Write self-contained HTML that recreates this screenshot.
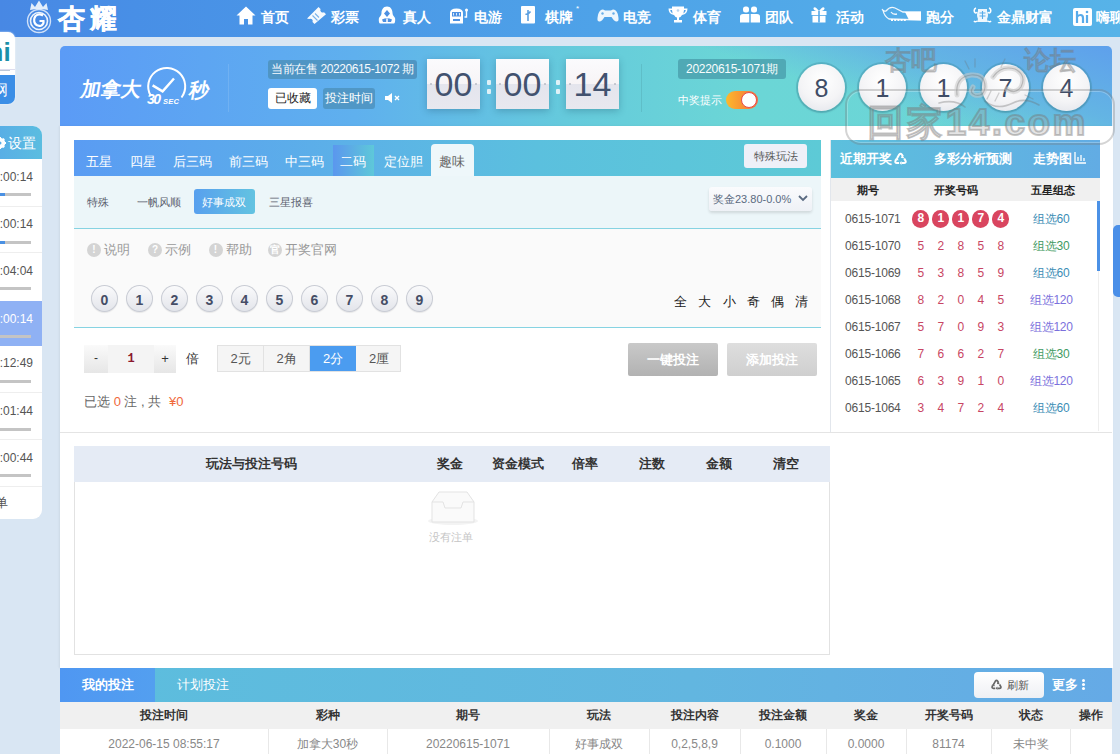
<!DOCTYPE html>
<html><head><meta charset="utf-8">
<style>
*{margin:0;padding:0;box-sizing:border-box}
html,body{width:1120px;height:754px;overflow:hidden}
body{position:relative;background:#d9e6f3;font-family:"Liberation Sans",sans-serif;color:#555;font-size:12px}
.a{position:absolute}
#nav{left:0;top:0;width:1120px;height:37px;background:linear-gradient(90deg,#4888e4 0%,#488fe6 12%,#4ea2e8 53%,#55b0e8 91%,#57b3e8 100%)}
.ni{position:absolute;top:0;height:37px;line-height:34px;color:#fff;font-weight:bold;font-size:14px;white-space:nowrap}
#banner{left:60px;top:46px;width:1052px;height:80px;border-radius:5px 5px 0 0;background:linear-gradient(18deg,rgba(94,160,236,0) 0%,rgba(94,160,236,0) 68%,rgba(94,160,236,.6) 82%,rgba(94,160,236,1) 100%),linear-gradient(90deg,#5b9bf6 0%,#5fb0ee 28%,#65cadc 48%,#6bd6d6 65%,#6cd5d7 100%)}
#main{left:60px;top:126px;width:1053px;height:542px;background:#fff;box-shadow:-1px 0 2px rgba(0,0,0,.06)}
.cd{top:13px;width:53px;height:50px;background:linear-gradient(#fbfbfd 0%,#f7f4f6 50%,#e4e5ed 51%,#e8e8ef 100%);box-shadow:0 2px 7px rgba(20,60,90,.28);color:#42526f;font-size:34px;line-height:51px;text-align:center}
.cl{top:34px;width:5px;height:14px}
.cl:before,.cl:after{content:"";position:absolute;left:0.5px;width:4.5px;height:4.5px;border-radius:1px;background:#e0f2f8}
.cl:before{top:0}.cl:after{top:9px}
.ball{top:17.5px;width:47px;height:47px;border-radius:50%;background:radial-gradient(circle at 50% 35%,#ffffff 0%,#f4f4f6 55%,#dfe1e8 100%);box-shadow:0 0 0 2px rgba(60,140,160,.35),0 1px 3px rgba(0,0,0,.2);color:#3f4d66;font-size:25px;line-height:48px;text-align:center}
.tb{position:absolute;top:4px;height:32px;line-height:35px;color:#fff;font-size:13px;white-space:nowrap}
.sb{position:absolute;top:14px;height:24px;line-height:24px;color:#5a606e;font-size:11px;white-space:nowrap}
.hi{position:absolute;top:13px;line-height:16px;color:#999;font-size:13px;white-space:nowrap}
.hi i{display:inline-block;width:14px;height:14px;border-radius:7px;background:#d4d4d4;color:#fff;font-style:normal;font-size:10px;line-height:14px;text-align:center;margin-right:3px;vertical-align:1px;font-weight:bold}
.nb{position:absolute;top:56px;width:27px;height:27px;border-radius:50%;background:linear-gradient(#fbfbfc,#e2e4ea);box-shadow:inset 0 0 0 1px #c9ccd4,0 1px 1px rgba(0,0,0,.08);color:#454d66;font-weight:bold;font-size:14px;line-height:30px;text-align:center}
.md{position:absolute;top:0;width:46px;height:25px;line-height:25px;text-align:center;color:#555;font-size:13px}
.rh{position:absolute;top:0;line-height:38px;color:#fff;font-weight:bold;font-size:13px;white-space:nowrap}
.ch{position:absolute;top:0;line-height:24px;color:#222;font-weight:bold;font-size:11px;white-space:nowrap}
.rw{left:0;width:269px;height:20px;line-height:20px;font-size:12px;letter-spacing:-0.2px}
.rb{position:absolute;top:1.3px;width:17.4px;height:17.4px;border-radius:50%;background:#d9455f;color:#fff;font-weight:bold;font-size:12px;line-height:17.4px;text-align:center}
.th{position:absolute;top:0;line-height:36px;color:#333;font-size:13px;font-weight:bold;white-space:nowrap}
.bh{top:34px;height:27px;line-height:27px;text-align:center;color:#333;font-weight:bold;font-size:12px}
.bd{top:61px;height:25px;line-height:31px;text-align:center;color:#888;font-size:12px}

.cd:before,.cd:after{content:"";position:absolute;top:24px;width:2px;height:2px;background:#b9bcc6;border-radius:1px}.cd:before{left:3px}.cd:after{right:3px}

</style></head><body>
<div id="nav" class="a">
 <!-- logo -->
 <svg class="a" style="left:25px;top:0" width="30" height="35" viewBox="0 0 30 35">
  <g fill="none" stroke="#fff">
   <circle cx="14" cy="21" r="11.5" stroke-width="1.4" stroke-opacity=".75"/>
   <circle cx="14" cy="21" r="8.5" stroke-width="1.6" stroke-opacity=".9"/>
   <path d="M18 15.5 Q14 13 10.5 16 Q8 19.5 10 23.5 Q12.5 27 16.5 25.5 Q19 24 18.5 21 L14.5 21" stroke-width="2.2"/>
  </g>
  <path d="M5 10 L6.5 3 L10 7 L14 0.5 L18 7 L21.5 3 L23 10 Q14 8 5 10 Z" fill="#fff" fill-opacity=".85"/>
 </svg>
 <div class="a" style="left:58px;top:1px;font-size:27px;font-weight:bold;color:#fff;line-height:36px;letter-spacing:5px;-webkit-text-stroke:0.5px #fff">杏耀</div>
 <!-- nav items -->
 <svg class="a" style="left:236px;top:6px" width="20" height="19" viewBox="0 0 20 19"><path d="M10 0.5 L19.5 9.5 L16.5 9.5 L16.5 18.5 L12 18.5 L12 13 L8 13 L8 18.5 L3.5 18.5 L3.5 9.5 L0.5 9.5 Z" fill="#fff"/></svg>
 <div class="ni" style="left:261px">首页</div>
 <svg class="a" style="left:306px;top:6px" width="21" height="19" viewBox="0 0 21 19"><path d="M1 12.5 L12.5 1 L14.5 3 Q13.8 5 15.2 6 Q16.5 7 18 6.3 L20 8.3 L8.5 18 L6.5 16 Q7.2 14.5 6 13.3 Q4.8 12.2 3 13 Z" fill="#fff" fill-opacity=".95"/><path d="M6.5 9.5 L11.5 14.5 M9 7.5 L13 11.5" stroke="#7ab3ea" stroke-width="1.1"/></svg>
 <div class="ni" style="left:331px">彩票</div>
 <svg class="a" style="left:378px;top:6px" width="18" height="18" viewBox="0 0 18 18"><path d="M9 0.5 C5 0.5 3.5 4 3.5 7 C3.5 9 2 10.5 1 12 C0.5 14 1 17.5 2 17.5 L16 17.5 C17 17.5 17.5 14 17 12 C16 10.5 14.5 9 14.5 7 C14.5 4 13 0.5 9 0.5 Z" fill="#fff"/><path d="M9 4 L12 7.5 L9 11 L6 7.5 Z" fill="#4d90e2"/><path d="M4 13.5 Q9 11 14 13.5 L13 16 L5 16 Z" fill="#4d90e2"/><path d="M9 12.5 L9 16" stroke="#fff" stroke-width="1.5"/></svg>
 <div class="ni" style="left:403px">真人</div>
 <svg class="a" style="left:449px;top:8px" width="20" height="16" viewBox="0 0 20 16"><path d="M1 5 Q1 0.5 7.5 0.5 Q14 0.5 14 5 L14 15.5 L1 15.5 Z" fill="#fff"/><rect x="3" y="4" width="9" height="4.5" fill="#4e92e3"/><path d="M4.5 5 L4.5 7.5 M7.5 5 L7.5 7.5 M10.5 5 L10.5 7.5" stroke="#fff" stroke-width=".8"/><rect x="4" y="11" width="7" height="2" fill="#4e92e3"/><path d="M15.5 9 L17.5 9 L17.5 2" stroke="#fff" stroke-width="1.4" fill="none"/><circle cx="17.5" cy="2" r="1.5" fill="#fff"/></svg>
 <div class="ni" style="left:474px">电游</div>
 <svg class="a" style="left:521px;top:6px" width="14" height="18" viewBox="0 0 14 18"><rect x="0" y="0" width="14" height="17.5" rx="1" fill="#fff"/><path d="M7 4 L7 15 M4.5 8 Q7 9 9.5 5.5" stroke="#5b9fe0" stroke-width="1.6" fill="none"/></svg>
 <div class="ni" style="left:545px">棋牌</div>
 <div class="a" style="left:576px;top:4px;color:#fff;font-size:8px">*</div>
 <svg class="a" style="left:597px;top:9px" width="22" height="13" viewBox="0 0 22 13"><path d="M4 1 Q6 0 8 1.5 L14 1.5 Q16 0 18 1 Q21 3 21.5 9 Q22 13 19 12.5 Q17 12 14.5 8 L7.5 8 Q5 12 3 12.5 Q0 13 0.5 9 Q1 3 4 1 Z" fill="#fff" fill-opacity=".9"/><circle cx="5.5" cy="4.5" r="1.2" fill="#6aaee8"/><circle cx="16.5" cy="4.5" r="1.2" fill="#6aaee8"/></svg>
 <div class="ni" style="left:623px">电竞</div>
 <svg class="a" style="left:668px;top:6px" width="20" height="17" viewBox="0 0 20 17"><path d="M4 0.5 L16 0.5 L16 2.5 L19.5 2.5 Q19.5 8 14 9 Q12.5 11.5 11 11.5 L11 14 L14 14 L14 16.5 L6 16.5 L6 14 L9 14 L9 11.5 Q7.5 11.5 6 9 Q0.5 8 0.5 2.5 L4 2.5 Z" fill="#fff"/><path d="M4 4 L2.2 4 Q2.6 7 4.6 7.6 Z M16 4 L17.8 4 Q17.4 7 15.4 7.6 Z" fill="#52a2e7"/><circle cx="10" cy="4.5" r="1.3" fill="#b8d4f0"/></svg>
 <div class="ni" style="left:693px">体育</div>
 <svg class="a" style="left:740px;top:6px" width="20" height="17" viewBox="0 0 20 17"><rect x="3" y="0.5" width="6" height="6" rx="2.5" fill="#fff"/><rect x="11" y="0.5" width="6" height="6" rx="2.5" fill="#fff"/><path d="M0 16.5 L0 10.5 Q0 8 3 8 L9.3 8 L9.3 16.5 Z M10.7 16.5 L10.7 8 L17 8 Q20 8 20 10.5 L20 16.5 Z" fill="#fff"/></svg>
 <div class="ni" style="left:765px">团队</div>
 <svg class="a" style="left:811px;top:6px" width="16" height="17" viewBox="0 0 16 17"><rect x="0.5" y="5" width="15" height="4" fill="#fff"/><rect x="1.5" y="9.8" width="13" height="6.7" fill="#fff"/><rect x="7.2" y="5" width="1.6" height="11.5" fill="#55a8e8"/><path d="M8 5 Q4 -0.5 2.5 2 Q2 5 8 5 Q14 5 13.5 2 Q12 -0.5 8 5Z" fill="#fff"/></svg>
 <div class="ni" style="left:836px">活动</div>
 <svg class="a" style="left:881px;top:6px" width="41" height="16" viewBox="0 0 41 16"><g fill="none" stroke="#fff" stroke-width="1.3" stroke-opacity=".9"><path d="M1 3 Q3 6 5 5 Q9 0 14 2 Q18 4 22 6 L40 6"/><path d="M2 4 Q3 10 8 13 L40 14"/><path d="M10 6 Q12 9 16 8"/></g><path d="M24 6 L40 6 L40 14 L28 14 Q26 10 24 6 Z" fill="#fff"/><path d="M10 14 L26 14" stroke="#fff" stroke-width="1.8" stroke-dasharray="2 1.2"/></svg>
 <div class="ni" style="left:926px">跑分</div>
 <svg class="a" style="left:973px;top:7px" width="19" height="16" viewBox="0 0 19 16"><g fill="none" stroke="#fff" stroke-width="1.5"><path d="M3 1 Q0.5 2 1.5 5 Q3 7 4 5"/><path d="M16 1 Q18.5 2 17.5 5 Q16 7 15 5"/><path d="M4 14 Q2 15.5 1 14"/><path d="M15 14 Q17 15.5 18 14"/></g><path d="M5 2 L14 2 L14 4 Q16 8 14 12 L15 15 L4 15 L5 12 Q3 8 5 4 Z" fill="#fff" fill-opacity=".9"/><path d="M6.5 6 L12.5 6 M6.5 9 L12.5 9 M9.5 4 L9.5 12" stroke="#57abe9" stroke-width="1.1"/></svg>
 <div class="ni" style="left:997px">金鼎财富</div>
 <svg class="a" style="left:1073px;top:8px" width="19" height="18" viewBox="0 0 19 18"><rect x="0" y="0" width="19" height="18" rx="2" fill="#fff"/><path d="M4 3 L4 15 M4 9 Q5 7 7.5 7 Q10 7 10 10 L10 15" stroke="#58abea" stroke-width="2.2" fill="none"/><path d="M14 7 L14 15" stroke="#58abea" stroke-width="2.2"/><circle cx="14" cy="4" r="1.3" fill="#58abea"/></svg>
 <div class="ni" style="left:1096px">嗨聊</div>
</div>

<div class="a" style="left:-10px;top:32px;width:25px;height:72px;border-radius:7px;background:#fff;box-shadow:0 0 2px rgba(255,255,255,.8);overflow:hidden">
 <div class="a" style="left:-2.5px;top:6px;font-size:26px;font-weight:bold;color:#1a8fa8;line-height:28px">hi</div>
 <div class="a" style="left:0;top:37px;width:25px;height:1px;background:#dde"></div><div class="a" style="left:0;top:38px;width:20px;height:1px;background:#bcc8d8"></div>
 <div class="a" style="left:0;top:43px;width:25px;height:29px;background:#3b8ee6;color:#fff;font-size:15px;line-height:29px;padding-left:3px">网</div>
</div>
<div class="a" style="left:-20px;top:126px;width:62px;height:393px;border-radius:9px;background:#fff;overflow:hidden">
 <div class="a" style="left:0;top:0;width:62px;height:33px;background:linear-gradient(90deg,#58a8e8,#5bbde0);color:#fff;font-size:14px;line-height:34px;padding-left:28px">设置</div>
 <svg class="a" style="left:14px;top:11px" width="12" height="12" viewBox="0 0 12 12"><circle cx="6" cy="6" r="4" fill="none" stroke="#fff" stroke-width="2.5"/><path d="M6 0 L6 12 M0 6 L12 6 M1.8 1.8 L10.2 10.2 M10.2 1.8 L1.8 10.2" stroke="#fff" stroke-width="2"/><circle cx="6" cy="6" r="1.5" fill="#5aaee6"/></svg>
 <div class="a" style="left:0;top:33.0px;width:62px;height:47.8px;border-bottom:1px solid #eee;">
  <div class="a" style="right:9px;top:9.5px;font-size:12px;color:#555;line-height:16px">:00:14</div>
  <div class="a" style="left:0;top:34px;width:51px;height:3px;background:#c4c4c4"><div class="a" style="left:0;top:0;width:25px;height:3px;background:#4a90e2"></div></div>
 </div>
 <div class="a" style="left:0;top:80.8px;width:62px;height:46.2px;border-bottom:1px solid #eee;">
  <div class="a" style="right:9px;top:9.5px;font-size:12px;color:#555;line-height:16px">:00:14</div>
  <div class="a" style="left:0;top:34px;width:51px;height:3px;background:#c4c4c4"><div class="a" style="left:0;top:0;width:25px;height:3px;background:#4a90e2"></div></div>
 </div>
 <div class="a" style="left:0;top:127.0px;width:62px;height:48.0px;">
  <div class="a" style="right:9px;top:9.5px;font-size:12px;color:#555;line-height:16px">:04:04</div>
  <div class="a" style="left:0;top:34px;width:51px;height:3px;background:#c4c4c4"></div>
 </div>
 <div class="a" style="left:0;top:175.0px;width:62px;height:44.7px;background:#8fb1f4;">
  <div class="a" style="right:9px;top:9.5px;font-size:12px;color:#fff;line-height:16px">:00:14</div>
  <div class="a" style="left:0;top:34px;width:51px;height:3px;background:#c4c4c4"></div>
 </div>
 <div class="a" style="left:0;top:219.7px;width:62px;height:47.8px;border-bottom:1px solid #eee;">
  <div class="a" style="right:9px;top:9.5px;font-size:12px;color:#555;line-height:16px">:12:49</div>
  <div class="a" style="left:0;top:34px;width:51px;height:3px;background:#c4c4c4"></div>
 </div>
 <div class="a" style="left:0;top:267.5px;width:62px;height:46.8px;border-bottom:1px solid #eee;">
  <div class="a" style="right:9px;top:9.5px;font-size:12px;color:#555;line-height:16px">:01:44</div>
  <div class="a" style="left:0;top:34px;width:51px;height:3px;background:#c4c4c4"></div>
 </div>
 <div class="a" style="left:0;top:314.3px;width:62px;height:47.2px;border-bottom:1px solid #eee;">
  <div class="a" style="right:9px;top:9.5px;font-size:12px;color:#555;line-height:16px">:00:44</div>
  <div class="a" style="left:0;top:34px;width:51px;height:3px;background:#c4c4c4"></div>
 </div>
 <div class="a" style="left:2px;top:369px;font-size:13px;color:#555;line-height:16px">菜单</div>
</div>
<div class="a" style="left:1113px;top:225px;width:7px;height:72px;border-radius:5px 0 0 5px;background:#4a8fe8"></div>
<div id="banner" class="a">
 <div class="a" style="left:21px;top:32px;font-size:20px;line-height:22px;color:#fff;font-weight:bold;letter-spacing:0px;transform:skewX(-10deg)">加拿大</div>
 <svg class="a" style="left:82px;top:18px" width="52" height="44" viewBox="0 0 52 44">
  <path d="M8.6 31.5 A18.5 18.5 0 1 1 39.5 33.5" fill="none" stroke="#fff" stroke-width="2"/>
  <path d="M10.6 21.4 L20.6 27.4 L32 14.5" fill="none" stroke="#fff" stroke-width="2.4"/>
  <text x="5" y="40" font-family="Liberation Sans" font-weight="bold" font-style="italic" font-size="14" fill="#fff" letter-spacing="-1.5">30</text>
  <text x="21" y="40" font-family="Liberation Sans" font-weight="bold" font-style="italic" font-size="7.5" fill="#fff" letter-spacing=".3">SEC</text>
 </svg>
 <div class="a" style="left:129px;top:33px;font-size:20px;line-height:22px;color:#fff;font-weight:bold;transform:skewX(-10deg)">秒</div>
 <div class="a" style="left:168px;top:18px;width:1px;height:48px;background:rgba(255,255,255,.12)"></div>
 <div class="a" style="left:208px;top:14px;width:149px;height:19px;background:#4f94c2;border-radius:3px;color:#fff;font-size:12px;line-height:19px;text-align:center;white-space:nowrap;letter-spacing:-0.4px;opacity:.95">当前在售 20220615-1072 期</div>
 <div class="a" style="left:208px;top:42px;width:49px;height:21px;background:#fff;border-radius:3px;color:#222;font-size:12px;line-height:21px;text-align:center">已收藏</div>
 <div class="a" style="left:263px;top:42px;width:52px;height:21px;background:#5097c6;border-radius:3px;color:#fff;font-size:12px;line-height:21px;text-align:center">投注时间</div>
 <svg class="a" style="left:324px;top:46px" width="17" height="12" viewBox="0 0 17 12"><path d="M1 4 L4 4 L8 1 L8 11 L4 8 L1 8 Z" fill="#fff"/><path d="M11 4 L15 8 M15 4 L11 8" stroke="#fff" stroke-width="1.4"/></svg>
 <!-- countdown -->
 <div class="cd a" style="left:367px">00</div>
 <div class="cl a" style="left:426px"></div>
 <div class="cd a" style="left:436px">00</div>
 <div class="cl a" style="left:495px"></div>
 <div class="cd a" style="left:506px">14</div>
 <div class="a" style="left:581px;top:18px;width:1px;height:48px;background:rgba(0,0,0,.08)"></div>
 <div class="a" style="left:618px;top:13px;width:108px;height:20px;background:#4fa7b4;border-radius:3px;color:#fff;font-size:12px;line-height:20px;text-align:center;white-space:nowrap;letter-spacing:-0.3px;opacity:.95">20220615-1071期</div>
 <div class="a" style="left:618px;top:47px;font-size:11px;color:#fff;line-height:14px">中奖提示</div>
 <div class="a" style="left:666px;top:45px;width:32px;height:18px;border-radius:9px;background:linear-gradient(90deg,#fcb92d,#f36d3c)"><div class="a" style="right:1px;top:1px;width:16px;height:16px;border-radius:8px;background:#fff;border:1.5px solid #e94b4b"></div></div>
 <div class="ball a" style="left:738px">8</div>
 <div class="ball a" style="left:799px">1</div>
 <div class="ball a" style="left:860px">1</div>
 <div class="ball a" style="left:922px">7</div>
 <div class="ball a" style="left:983px">4</div>
</div>

<div id="main" class="a">
 <div class="a" style="left:770px;top:14px;width:1px;height:293px;background:#e2e6ec"></div>
 <!-- tab bar -->
 <div class="a" style="left:14px;top:14px;width:747px;height:36px;background:linear-gradient(90deg,#5a9cf3 0%,#5cb0e8 35%,#5bc0de 62%,#5dcad6 100%)">
  <div class="a" style="left:259px;top:5px;width:41px;height:31px;background:linear-gradient(90deg,#5b97ee,#5ec8d9)"></div>
  <div class="tb" style="left:12px">五星</div>
  <div class="tb" style="left:56px">四星</div>
  <div class="tb" style="left:99px">后三码</div>
  <div class="tb" style="left:155px">前三码</div>
  <div class="tb" style="left:211px">中三码</div>
  <div class="tb" style="left:266px">二码</div>
  <div class="tb" style="left:310px">定位胆</div>
  <div class="a" style="left:357px;top:4px;width:43px;height:32px;background:#eef7fa;border-radius:4px 4px 0 0"></div>
  <div class="tb" style="left:365px;color:#666">趣味</div>
  <div class="a" style="left:670px;top:4px;width:63px;height:24px;background:#eef0f8;border-radius:3px;color:#555;font-size:11px;line-height:24px;text-align:center">特殊玩法</div>
 </div>
 <!-- sub bar -->
 <div class="a" style="left:14px;top:50px;width:747px;height:53px;background:#ecf6f9;border-bottom:1px solid #86d3e2">
  <div class="sb" style="left:13px">特殊</div>
  <div class="sb" style="left:63px">一帆风顺</div>
  <div class="a" style="left:120px;top:13px;width:61px;height:25px;border-radius:3px;background:linear-gradient(90deg,#58a0ee,#63c3e1)"></div>
  <div class="sb" style="left:128px;color:#fff">好事成双</div>
  <div class="sb" style="left:195px">三星报喜</div>
  <div class="a" style="left:635px;top:11px;width:103px;height:24px;border-radius:3px;background:linear-gradient(#fafbfd,#eef1f6);box-shadow:0 2px 3px rgba(0,0,0,.12);color:#5a6a80;font-size:11px;line-height:24px;padding-left:4px">奖金23.80-0.0%</div>
  <svg class="a" style="left:724px;top:19px" width="10" height="7" viewBox="0 0 10 7"><path d="M1 1 L5 5 L9 1" stroke="#5a6a80" stroke-width="1.8" fill="none"/></svg>
 </div>
 <!-- number area -->
 <div class="a" style="left:14px;top:103px;width:747px;height:99px;background:#fafafa;border-bottom:1px solid #86d3e2">
  <div class="hi" style="left:13px"><i>!</i>说明</div>
  <div class="hi" style="left:74px"><i>?</i>示例</div>
  <div class="hi" style="left:134.5px"><i>!</i>帮助</div>
  <div class="hi" style="left:194px"><i>官</i>开奖官网</div>
  <div class="nb" style="left:17px">0</div>
  <div class="nb" style="left:52px">1</div>
  <div class="nb" style="left:87px">2</div>
  <div class="nb" style="left:122px">3</div>
  <div class="nb" style="left:157px">4</div>
  <div class="nb" style="left:192px">5</div>
  <div class="nb" style="left:227px">6</div>
  <div class="nb" style="left:262px">7</div>
  <div class="nb" style="left:297px">8</div>
  <div class="nb" style="left:332px">9</div>
  <div class="a" style="left:600px;top:65px;font-size:13px;color:#222;letter-spacing:11.3px;line-height:16px">全大小奇偶清</div>
 </div>
 <!-- controls -->
 <div class="a" style="left:24px;top:219px;width:24px;height:28px;background:linear-gradient(#fafafa,#e6e6e6);text-align:center;line-height:26px;color:#333;font-size:12px">-</div>
 <div class="a" style="left:48px;top:219px;width:46px;height:28px;background:#f4f4f4;text-align:center;line-height:28px;color:#8b1a2e;font-size:12px;font-family:'Liberation Mono',monospace;font-weight:bold">1</div>
 <div class="a" style="left:94px;top:219px;width:22px;height:28px;background:linear-gradient(#fafafa,#e6e6e6);text-align:center;line-height:28px;color:#333;font-size:13px">+</div>
 <div class="a" style="left:126px;top:219px;line-height:28px;color:#333;font-size:13px">倍</div>
 <div class="a" style="left:157px;top:219px;width:184px;height:27px;border:1px solid #e2e2e2;background:#f5f5f5">
  <div class="md" style="left:0;border-right:1px solid #e2e2e2">2元</div>
  <div class="md" style="left:46px;border-right:1px solid #e2e2e2">2角</div>
  <div class="md" style="left:92px;width:46px;background:#4b9cf0;color:#fff">2分</div>
  <div class="md" style="left:138px">2厘</div>
 </div>
 <div class="a" style="left:568px;top:217px;width:90px;height:33px;border-radius:2px;background:linear-gradient(#c9c9c9,#b2b2b2);color:#fff;font-weight:bold;font-size:13px;line-height:33px;text-align:center">一键投注</div>
 <div class="a" style="left:667px;top:217px;width:90px;height:33px;border-radius:2px;background:linear-gradient(#dedede,#cfcfcf);color:#fff;font-weight:bold;font-size:13px;line-height:33px;text-align:center">添加投注</div>
 <div class="a" style="left:24px;top:268px;font-size:13px;color:#666;line-height:16px">已选 <span style="color:#f0683a">0</span> 注 , 共 <span style="color:#f0683a"><span style="margin-left:4px">¥0</span></span></div>
 <!-- right panel -->
 <div class="a" style="left:771px;top:14px;width:269px;height:38px;background:linear-gradient(90deg,#5cc0dd,#62ace4)">
  <div class="rh" style="left:9px">近期开奖</div>
  <svg class="a" style="left:63px;top:12px" width="13" height="13" viewBox="0 0 13 13"><g fill="none" stroke="#fff" stroke-width="2" stroke-linejoin="round"><path d="M3.2 6 L5.2 2.5 Q6.5 0.8 7.8 2.5 L9 4.5"/><path d="M10.2 6.5 L11.6 9 Q12.2 11 10 11 L7.5 11"/><path d="M5 11 L2.8 11 Q0.8 11 1.4 9 L2.2 7.5"/></g><path d="M8 3 L10.5 6.2 L7 6 Z M7.5 9 L5.5 11 L7.5 13 Z M0.5 7.5 L3.5 5 L4.5 8.5 Z" fill="#fff"/></svg>
  <div class="rh" style="left:103px">多彩分析预测</div>
  <div class="rh" style="left:202px">走势图</div>
  <svg class="a" style="left:243px;top:12px" width="13" height="12" viewBox="0 0 13 12"><path d="M1 0 L1 11 L12 11 M4 5 L4 9 M7 3 L7 9 M10 6 L10 9" stroke="#fff" stroke-width="1.3" fill="none"/></svg>
 </div>
 <div class="a" style="left:771px;top:52px;width:269px;height:23px;background:#f0f0f0">
  <div class="ch" style="left:25.5px">期号</div>
  <div class="ch" style="left:103px">开奖号码</div>
  <div class="ch" style="left:199.5px">五星组态</div>
 </div>
 <div class="a" style="left:1037px;top:75px;width:3px;height:70px;background:#4b91e6"></div>
 <div class="a" style="left:1038px;top:145px;width:1px;height:160px;background:#eee"></div>
 <div class="a" style="left:771px;top:0"> <div class="a rw" style="top:83px">
  <div class="a" style="left:14px;top:0;color:#555">0615-1071</div>
  <div class="rb" style="left:81.0px">8</div>
  <div class="rb" style="left:101.0px">1</div>
  <div class="rb" style="left:121.0px">1</div>
  <div class="rb" style="left:141.0px">7</div>
  <div class="rb" style="left:161.0px">4</div>
  <div class="a" style="left:180.3px;width:80px;text-align:center;color:#3b8db5">组选60</div>
 </div>
 <div class="a rw" style="top:110px">
  <div class="a" style="left:14px;top:0;color:#555">0615-1070</div>
  <div class="a" style="left:79.7px;width:20px;text-align:center;color:#c84563">5</div>
  <div class="a" style="left:99.7px;width:20px;text-align:center;color:#c84563">2</div>
  <div class="a" style="left:119.7px;width:20px;text-align:center;color:#c84563">8</div>
  <div class="a" style="left:139.7px;width:20px;text-align:center;color:#c84563">5</div>
  <div class="a" style="left:159.7px;width:20px;text-align:center;color:#c84563">8</div>
  <div class="a" style="left:180.3px;width:80px;text-align:center;color:#3f9a62">组选30</div>
 </div>
 <div class="a rw" style="top:137px">
  <div class="a" style="left:14px;top:0;color:#555">0615-1069</div>
  <div class="a" style="left:79.7px;width:20px;text-align:center;color:#c84563">5</div>
  <div class="a" style="left:99.7px;width:20px;text-align:center;color:#c84563">3</div>
  <div class="a" style="left:119.7px;width:20px;text-align:center;color:#c84563">8</div>
  <div class="a" style="left:139.7px;width:20px;text-align:center;color:#c84563">5</div>
  <div class="a" style="left:159.7px;width:20px;text-align:center;color:#c84563">9</div>
  <div class="a" style="left:180.3px;width:80px;text-align:center;color:#3b8db5">组选60</div>
 </div>
 <div class="a rw" style="top:164px">
  <div class="a" style="left:14px;top:0;color:#555">0615-1068</div>
  <div class="a" style="left:79.7px;width:20px;text-align:center;color:#c84563">8</div>
  <div class="a" style="left:99.7px;width:20px;text-align:center;color:#c84563">2</div>
  <div class="a" style="left:119.7px;width:20px;text-align:center;color:#c84563">0</div>
  <div class="a" style="left:139.7px;width:20px;text-align:center;color:#c84563">4</div>
  <div class="a" style="left:159.7px;width:20px;text-align:center;color:#c84563">5</div>
  <div class="a" style="left:180.3px;width:80px;text-align:center;color:#7b70dc">组选120</div>
 </div>
 <div class="a rw" style="top:191px">
  <div class="a" style="left:14px;top:0;color:#555">0615-1067</div>
  <div class="a" style="left:79.7px;width:20px;text-align:center;color:#c84563">5</div>
  <div class="a" style="left:99.7px;width:20px;text-align:center;color:#c84563">7</div>
  <div class="a" style="left:119.7px;width:20px;text-align:center;color:#c84563">0</div>
  <div class="a" style="left:139.7px;width:20px;text-align:center;color:#c84563">9</div>
  <div class="a" style="left:159.7px;width:20px;text-align:center;color:#c84563">3</div>
  <div class="a" style="left:180.3px;width:80px;text-align:center;color:#7b70dc">组选120</div>
 </div>
 <div class="a rw" style="top:218px">
  <div class="a" style="left:14px;top:0;color:#555">0615-1066</div>
  <div class="a" style="left:79.7px;width:20px;text-align:center;color:#c84563">7</div>
  <div class="a" style="left:99.7px;width:20px;text-align:center;color:#c84563">6</div>
  <div class="a" style="left:119.7px;width:20px;text-align:center;color:#c84563">6</div>
  <div class="a" style="left:139.7px;width:20px;text-align:center;color:#c84563">2</div>
  <div class="a" style="left:159.7px;width:20px;text-align:center;color:#c84563">7</div>
  <div class="a" style="left:180.3px;width:80px;text-align:center;color:#3f9a62">组选30</div>
 </div>
 <div class="a rw" style="top:245px">
  <div class="a" style="left:14px;top:0;color:#555">0615-1065</div>
  <div class="a" style="left:79.7px;width:20px;text-align:center;color:#c84563">6</div>
  <div class="a" style="left:99.7px;width:20px;text-align:center;color:#c84563">3</div>
  <div class="a" style="left:119.7px;width:20px;text-align:center;color:#c84563">9</div>
  <div class="a" style="left:139.7px;width:20px;text-align:center;color:#c84563">1</div>
  <div class="a" style="left:159.7px;width:20px;text-align:center;color:#c84563">0</div>
  <div class="a" style="left:180.3px;width:80px;text-align:center;color:#7b70dc">组选120</div>
 </div>
 <div class="a rw" style="top:272px">
  <div class="a" style="left:14px;top:0;color:#555">0615-1064</div>
  <div class="a" style="left:79.7px;width:20px;text-align:center;color:#c84563">3</div>
  <div class="a" style="left:99.7px;width:20px;text-align:center;color:#c84563">4</div>
  <div class="a" style="left:119.7px;width:20px;text-align:center;color:#c84563">7</div>
  <div class="a" style="left:139.7px;width:20px;text-align:center;color:#c84563">2</div>
  <div class="a" style="left:159.7px;width:20px;text-align:center;color:#c84563">4</div>
  <div class="a" style="left:180.3px;width:80px;text-align:center;color:#3b8db5">组选60</div>
 </div></div>
 <div class="a" style="left:0;top:306px;width:1052px;height:1px;background:#e4e4e4"></div>
 <!-- bet table -->
 <div class="a" style="left:14px;top:320px;width:756px;height:209px;border:1px solid #e2e2e2;border-top:none">
  <div class="a" style="left:-1px;top:0;width:756px;height:36px;background:#e5ebf5">
   <div class="th" style="left:132px">玩法与投注号码</div>
   <div class="th" style="left:363px">奖金</div>
   <div class="th" style="left:418px">资金模式</div>
   <div class="th" style="left:498px">倍率</div>
   <div class="th" style="left:565px">注数</div>
   <div class="th" style="left:632px">金额</div>
   <div class="th" style="left:699px">清空</div>
  </div>
  <svg class="a" style="left:350px;top:44px" width="56" height="36" viewBox="0 0 56 36"><ellipse cx="28" cy="31" rx="25" ry="4" fill="#f3f3f3"/><path d="M7 12 L14 2 L42 2 L49 12 L49 32 L7 32 Z" fill="#fafafa" stroke="#e3e3e3"/><path d="M7 12 L18 12 L20 18 L36 18 L38 12 L49 12" fill="none" stroke="#e3e3e3"/></svg>
  <div class="a" style="left:354px;top:84px;font-size:11px;color:#c5c5c5;line-height:14px">没有注单</div>
 </div>
</div>

<div class="a" style="left:60px;top:668px;width:1052px;height:86px;background:#fff">
 <div class="a" style="left:0;top:0;width:1052px;height:34px;background:linear-gradient(90deg,#5cbedd 0%,#62b6e0 60%,#65aae6 100%)">
  <div class="a" style="left:0;top:0;width:95px;height:34px;background:linear-gradient(90deg,#4f97f2,#539ff0);color:#fff;font-weight:bold;font-size:13px;line-height:34px;text-align:center">我的投注</div>
  <div class="a" style="left:117px;top:0;color:#fff;font-size:13px;line-height:34px">计划投注</div>
  <div class="a" style="left:914px;top:4px;width:70px;height:26px;border-radius:4px;background:linear-gradient(#fff,#eef0f4);color:#555;font-size:11px;line-height:26px;padding-left:33px">刷新</div>
  <svg class="a" style="left:931px;top:11px" width="11" height="11" viewBox="0 0 13 13"><g fill="none" stroke="#666" stroke-width="2" stroke-linejoin="round"><path d="M3.2 6 L5.2 2.5 Q6.5 0.8 7.8 2.5 L9 4.5"/><path d="M10.2 6.5 L11.6 9 Q12.2 11 10 11 L7.5 11"/><path d="M5 11 L2.8 11 Q0.8 11 1.4 9 L2.2 7.5"/></g><path d="M8 3 L10.5 6.2 L7 6 Z M7.5 9 L5.5 11 L7.5 13 Z M0.5 7.5 L3.5 5 L4.5 8.5 Z" fill="#666"/></svg>
  <div class="a" style="left:992px;top:0;color:#fff;font-size:13px;line-height:34px;font-weight:bold">更多</div>
  <div class="a" style="left:1022px;top:11px;width:3px;height:3px;border-radius:2px;background:#fff;box-shadow:0 4px 0 #fff,0 8px 0 #fff"></div>
 </div>
 <div class="a" style="left:0;top:34px;width:1052px;height:27px;background:#f0f0f0"></div>
 <div class="a bh" style="left:0px;width:208px">投注时间</div>
 <div class="a bd" style="left:0px;width:208px">2022-06-15 08:55:17</div>
 <div class="a bh" style="left:208px;width:119px">彩种</div>
 <div class="a bd" style="left:208px;width:119px">加拿大30秒</div>
 <div class="a" style="left:208px;top:61px;width:1px;height:25px;background:#e8e8e8"></div>
 <div class="a bh" style="left:327px;width:162px">期号</div>
 <div class="a bd" style="left:327px;width:162px">20220615-1071</div>
 <div class="a" style="left:327px;top:61px;width:1px;height:25px;background:#e8e8e8"></div>
 <div class="a bh" style="left:489px;width:100px">玩法</div>
 <div class="a bd" style="left:489px;width:100px">好事成双</div>
 <div class="a" style="left:489px;top:61px;width:1px;height:25px;background:#e8e8e8"></div>
 <div class="a bh" style="left:589px;width:91px">投注内容</div>
 <div class="a bd" style="left:589px;width:91px">0,2,5,8,9</div>
 <div class="a" style="left:589px;top:61px;width:1px;height:25px;background:#e8e8e8"></div>
 <div class="a bh" style="left:680px;width:86px">投注金额</div>
 <div class="a bd" style="left:680px;width:86px">0.1000</div>
 <div class="a" style="left:680px;top:61px;width:1px;height:25px;background:#e8e8e8"></div>
 <div class="a bh" style="left:766px;width:80px">奖金</div>
 <div class="a bd" style="left:766px;width:80px">0.0000</div>
 <div class="a" style="left:766px;top:61px;width:1px;height:25px;background:#e8e8e8"></div>
 <div class="a bh" style="left:846px;width:85px">开奖号码</div>
 <div class="a bd" style="left:846px;width:85px">81174</div>
 <div class="a" style="left:846px;top:61px;width:1px;height:25px;background:#e8e8e8"></div>
 <div class="a bh" style="left:931px;width:79px">状态</div>
 <div class="a bd" style="left:931px;width:79px">未中奖</div>
 <div class="a" style="left:931px;top:61px;width:1px;height:25px;background:#e8e8e8"></div>
 <div class="a bh" style="left:1010px;width:42px">操作</div>
 <div class="a bd" style="left:1010px;width:42px"></div>
 <div class="a" style="left:1010px;top:61px;width:1px;height:25px;background:#e8e8e8"></div>
</div>
<div class="a" style="left:845px;top:89px;width:270px;height:56px;border:2px solid rgba(120,120,120,.32);border-radius:16px;box-shadow:inset 0 0 0 1px rgba(255,255,255,.25)"></div>
<div class="a" style="left:885px;top:45px;font-size:26px;line-height:30px;color:rgba(150,150,150,.3);-webkit-text-stroke:1.4px rgba(110,110,110,.38);white-space:nowrap">杏吧</div>
<div class="a" style="left:1024px;top:45px;font-size:26px;line-height:30px;color:rgba(150,150,150,.3);-webkit-text-stroke:1.4px rgba(110,110,110,.38);white-space:nowrap">论坛</div>
<svg class="a" style="left:935px;top:55px" width="110" height="60" viewBox="0 0 110 60">
 <g fill="none" stroke-linecap="round">
  <path d="M22 40 Q20 22 36 20 Q50 19 50 32 Q49 42 40 40 Q34 38 38 32" stroke="rgba(200,200,200,.55)" stroke-width="5"/>
  <path d="M22 40 Q20 22 36 20 Q50 19 50 32 Q49 42 40 40 Q34 38 38 32" stroke="rgba(110,110,110,.35)" stroke-width="1.2"/>
  <path d="M58 22 Q66 10 80 14 Q92 20 86 32 Q80 40 72 34" stroke="rgba(200,200,200,.55)" stroke-width="5"/>
  <path d="M58 22 Q66 10 80 14 Q92 20 86 32 Q80 40 72 34" stroke="rgba(110,110,110,.35)" stroke-width="1.2"/>
  <path d="M4 48 Q20 44 30 52 M50 46 Q62 56 78 48 Q90 42 104 50" stroke="rgba(110,110,110,.35)" stroke-width="1.6"/>
  <path d="M30 6 L34 14 M40 4 L40 12 M70 4 L66 12 M52 44 L56 36 M60 46 L64 38 M90 40 L98 44" stroke="rgba(110,110,110,.3)" stroke-width="1.3"/>
 </g>
</svg>
<div class="a" style="left:867px;top:103px;font-size:37px;line-height:40px;font-weight:bold;color:rgba(160,160,160,.3);-webkit-text-stroke:2px rgba(115,115,115,.42);letter-spacing:2.4px;white-space:nowrap"><span style="font-weight:normal;-webkit-text-stroke:1.8px rgba(115,115,115,.42)">回家</span>14.com</div>

</body></html>
